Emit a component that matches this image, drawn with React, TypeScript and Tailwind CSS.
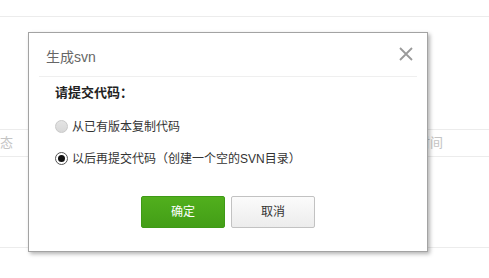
import React from 'react';

// ─── 背景表格 ──────────────────────────────────────────────

function BackgroundTable() {
  return (
    <div className="w-full">
      <div className="h-[17px] border-b border-[#ececec]" />
      <div className="h-[112px]" />
      <div className="flex h-[28px] items-center justify-between border-y border-[#ececec] text-[13px] text-[#c4c4c4]">
        <span className="-ml-[13px]">状态</span>
        <span className="mr-[46px]">时间</span>
      </div>
      <div className="h-[91px] border-b border-[#ececec]" />
    </div>
  );
}

// ─── 单选 ──────────────────────────────────────────────────

function Radio({ checked, disabled, label }: { checked?: boolean; disabled?: boolean; label: string }) {
  return (
    <label className="flex h-[20px] items-center gap-[4px] text-[12px] text-[#333]">
      {disabled ? (
        <span className="h-[13px] w-[13px] rounded-full border border-[#c9c9c9] bg-gradient-to-b from-[#e4e4e4] to-[#d8d8d8]" />
      ) : (
        <span className="flex h-[13px] w-[13px] items-center justify-center rounded-full border border-[#555] bg-white">
          {checked && <span className="h-[7px] w-[7px] rounded-full bg-[#111]" />}
        </span>
      )}
      <span className="translate-y-[1px]">{label}</span>
    </label>
  );
}

// ─── 对话框 ────────────────────────────────────────────────

export default function App() {
  return (
    <div
      className="relative h-[278px] w-full overflow-hidden bg-white"
      style={{ fontFamily: '"Liberation Sans", "Noto Sans CJK SC", sans-serif' }}
    >
      <BackgroundTable />

      <div className="absolute left-[28px] top-[32px] box-border h-[220px] w-[400px] border border-[#a3a3a3] bg-white shadow-[2px_2px_4px_rgba(0,0,0,0.3)]">
        {/* 标题 */}
        <div className="relative mx-[10px] box-border h-[44px] border-b border-[#efefef] pl-[7px] pt-[15px]">
          <span className="block text-[14px] leading-[18px] text-[#666]">生成svn</span>
          <button className="absolute right-[4px] top-[14px] h-[14px] w-[14px]" aria-label="关闭">
            <svg viewBox="0 0 14 14" className="h-[14px] w-[14px]">
              <path d="M1 1L13 13M13 1L1 13" stroke="#9a9a9a" strokeWidth="1.8" />
            </svg>
          </button>
        </div>

        {/* 内容 */}
        <div className="pl-[26px]">
          <p className="mt-[6px] text-[13px] font-bold leading-[20px] text-[#222]">请提交代码：</p>
          <div className="mt-[13px]">
            <Radio disabled label="从已有版本复制代码" />
          </div>
          <div className="mt-[12px]">
            <Radio checked label="以后再提交代码（创建一个空的SVN目录）" />
          </div>
        </div>

        {/* 按钮 */}
        <div className="mt-[28px] flex justify-center gap-[6px]">
          <button className="box-border h-[32px] w-[84px] rounded-[2px] border border-[#3f9a16] bg-gradient-to-b from-[#51af1d] to-[#439e17] text-[12px] text-white">
            确定
          </button>
          <button className="box-border h-[32px] w-[84px] rounded-[2px] border border-[#c2c2c2] bg-gradient-to-b from-[#fbfbfb] to-[#ececec] text-[12px] text-[#333]">
            取消
          </button>
        </div>
      </div>
    </div>
  );
}
